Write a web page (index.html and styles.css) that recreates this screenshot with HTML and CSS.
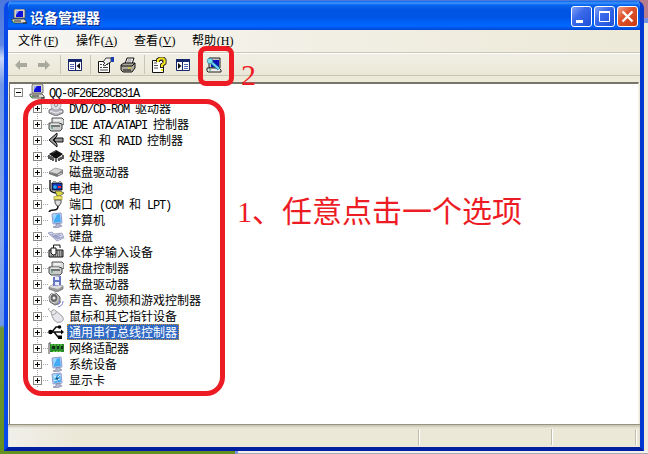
FILE: index.html
```
<!DOCTYPE html>
<html lang="zh-CN">
<head>
    <meta charset="UTF-8">
    <title>设备管理器</title>
    <link rel="stylesheet" href="styles.css">
</head>
<body>
    <!-- Shared icons -->
    <svg class="defs">
        <symbol id="computer" viewBox="0 0 16 16">
            <path d="M3 1l1-1h9l1 1v8H3z" fill="#d8d4c8" stroke="#555" stroke-width=".8"/>
            <path d="M5 2h7v6H5z" fill="#1010d8"/><path d="M5 2h3L5 6z" fill="#8ba8ff"/>
            <path d="M1 10h12l2 2v2H3l-2-2z" fill="#dedbd0" stroke="#333" stroke-width=".8"/>
            <path d="M3 12h7M12 14h4" stroke="#222"/><path d="M2 13h2" stroke="#27b43b"/>
        </symbol>
        <symbol id="lcd" viewBox="0 0 16 16">
            <path d="M4 2l9-1 1 10-9 1z" fill="#d6dcf2" stroke="#8c9ad0"/>
            <path d="M5 3l7-1 1 8-7 1z" fill="#43aaf5"/><path d="M5 3l4-.5-3 6z" fill="#9adcff"/>
            <path d="M8 12l4-1v2l2 1-5 2-4-1 3-1z" fill="#b4b8d4" stroke="#7c80a0" stroke-width=".7"/>
        </symbol>
        <symbol id="drive" viewBox="0 0 16 16">
            <path d="M4 2h10l2 2v4l-2 1H4z" fill="#ddd" stroke="#555"/>
            <path d="M1 7h10l3 1v5l-2 2H3l-2-2z" fill="#c8ccca" stroke="#444"/>
            <path d="M3 10h9" stroke="#222"/><path d="M3 8h8M6 4h7" stroke="#fff"/><path d="M3 12h2" stroke="#37a457"/>
        </symbol>
        <symbol id="disk" viewBox="0 0 16 16">
            <path d="M1 8l6-4 8 2v4l-6 3-8-3z" fill="#777"/><path d="M1 8l6-4 8 2-6 4z" fill="#d5d5d5" stroke="#888" stroke-width=".6"/>
            <path d="M10 11l4-2" stroke="#ddd"/>
        </symbol>
        <symbol id="panel" viewBox="0 0 16 16">
            <path d="M1.500 2.500h13v11h-13z" fill="#fff" stroke="#17276d"/><path d="M1 2h14v3H1z" fill="#17276d"/>
            <path d="M8.500 5v8" stroke="#17276d"/><path d="M3 7.500h4M3 9.500h4M3 11.500h4" stroke="#5268b5"/><path d="M13 6v6L9.500 9z" fill="#111"/>
        </symbol>
    </svg>

    <div class="desktop">
        <div class="behind"></div>
        <div class="taskedge"></div>
        <div class="window">
            <div class="titlebar">
                <svg class="icon"><use href="#computer"/></svg>
                <span class="title">设备管理器</span>
                <div class="controls">
                    <span class="control"><svg viewBox="0 0 21 21"><path d="M5 14h7v3H5z" fill="#fff"/></svg></span>
                    <span class="control"><svg viewBox="0 0 21 21"><path d="M5.500 5.500h10v10h-10z" fill="none" stroke="#fff"/><path d="M5 6h11" stroke="#fff" stroke-width="2"/></svg></span>
                    <span class="control close"><svg viewBox="0 0 21 21"><path d="M5.500 5.500l10 10m0-10l-10 10" stroke="#fff" stroke-width="2.400"/></svg></span>
                </div>
            </div>
            <div class="menubar">
                <span>文件<i class="key">(<u>F</u>)</i></span>
                <span>操作<i class="key">(<u>A</u>)</i></span>
                <span>查看<i class="key">(<u>V</u>)</i></span>
                <span>帮助<i class="key">(<u>H</u>)</i></span>
            </div>
            <div class="toolbar">
                <svg class="icon back" viewBox="0 0 16 16"><path d="M2 8l5-5v3h7v4H7v3z" fill="#aaa99d"/></svg>
                <svg class="icon forward" viewBox="0 0 16 16"><path d="M14 8L9 3v3H2v4h7v3z" fill="#aaa99d"/></svg>
                <span class="sep"></span>
                <svg class="icon"><use href="#panel"/></svg>
                <span class="sep"></span>
                <svg class="icon props" viewBox="0 0 18 16">
                    <path d="M1.500 4.500h11v11h-11z" fill="#fff" stroke="#111"/><path d="M3 7.500h2m1 0h5M3 10.500h2m1 0h5M3 13h8" stroke="#444"/>
                    <path d="M6 5l3-4h5v4l-4 2-2 2-2-1 2-2z" fill="#eee" stroke="#111" stroke-width=".8"/><path d="M14 0h3v5h-3z" fill="#1c3db0"/>
                </svg>
                <svg class="icon printer" viewBox="0 0 16 16">
                    <path d="M5 7l2-6h7l-2 6" fill="#fff" stroke="#111"/><path d="M7.500 3h4M7 5h4" stroke="#777"/>
                    <path d="M1 8l3-2h11v5l-3 4H3l-2-2z" fill="#aaa99c" stroke="#111"/><path d="M1 9h11l3-3M3 13h8" stroke="#111" fill="none"/><path d="M8 11h3" stroke="#eedf19"/>
                </svg>
                <span class="sep"></span>
                <svg class="icon" viewBox="0 0 16 16">
                    <path d="M1.500 3.500h9l2 2v10h-11z" fill="#fff" stroke="#111"/><path d="M3 6h3M3 8.500h4M3 11h4" stroke="#555"/>
                    <path d="M7 5V3l2-1.500h3L13.500 3v3L11 8v3" fill="none" stroke="#222" stroke-width="4"/>
                    <path d="M7 5V3l2-1.500h3L13.500 3v3L11 8v2m0 2v2" fill="none" stroke="#f5e51b" stroke-width="2.200"/>
                </svg>
                <svg class="icon mirrored"><use href="#panel"/></svg>
                <svg class="icon scan" viewBox="0 0 16 16">
                    <path d="M3 1h11v10H3z" fill="#ccc" stroke="#222"/><path d="M5 3h8v7H5z" fill="#1010b8"/>
                    <path d="M1 11h12l2 2v2H2l-1-1z" fill="#eee" stroke="#222"/><path d="M3 13h2" stroke="#27a43b"/>
                    <path d="M5 5l8 7" stroke="#08618c" stroke-width="3"/><path d="M5 5l8 7" stroke="#70d6fb" stroke-width="2"/><circle cx="4" cy="4" r="2.800" fill="#76e1ed" stroke="#356f89" stroke-width=".6"/>
                </svg>
            </div>
            <div class="tree">
                <div class="row root"><span class="box minus"></span><svg class="icon"><use href="#computer"/></svg><span class="name"><b>QQ-0F26E28CB31A</b></span></div>
                <div class="children">
                    <div class="row"><span class="box"></span><svg class="icon" viewBox="0 0 16 16"><path d="M1 10l6-3 8 3v3l-7 3-7-3z" fill="#b4b4c2" stroke="#777"/><ellipse cx="8" cy="5" rx="5" ry="5" fill="#ddddE8" stroke="#aaa"/><circle cx="8" cy="5" r="1.500" fill="#fff" stroke="#888"/><path d="M2 11l6 2 6-2" stroke="#eee" fill="none"/></svg><span class="name"><b>DVD/CD-ROM </b>驱动器</span></div>
                    <div class="row"><span class="box"></span><svg class="icon"><use href="#drive"/></svg><span class="name"><b>IDE ATA/ATAPI </b>控制器</span></div>
                    <div class="row"><span class="box"></span><svg class="icon" viewBox="0 0 16 16"><path d="M9 1L1 8l8 7v-3L5 8l4-4zM8 6h7v4H8L6 8z" fill="#999" stroke="#111"/></svg><span class="name"><b>SCSI </b>和<b> RAID </b>控制器</span></div>
                    <div class="row"><span class="box"></span><svg class="icon" viewBox="0 0 16 16"><path d="M1 6l7-4 7 4-7 5z" fill="#111"/><path d="M1 7v4m2-3v4m2-3v4m3-2v3m3-4v3m2-4v3m2-5v4" stroke="#111" stroke-width="1.400"/><path d="M4 5l4-2M2 8l6 4 6-4" stroke="#888" fill="none" stroke-width=".6"/></svg><span class="name">处理器</span></div>
                    <div class="row"><span class="box"></span><svg class="icon"><use href="#disk"/></svg><span class="name">磁盘驱动器</span></div>
                    <div class="row"><span class="box"></span><svg class="icon" viewBox="0 0 16 16"><path d="M2 0v9q0 3 6 4" stroke="#111" fill="none" stroke-width="1.400"/><path d="M4 3h10v7H4z" fill="#1638bc" stroke="#111"/><path d="M5 1h3v2H5zm6 0h2v2h-2z" fill="#999"/><path d="M7 5v4M5 7h4" stroke="#30d0f0"/><path d="M10 7h3" stroke="#f03030" stroke-width="2"/><path d="M7 11h5l4 2-4 3H9z" fill="#ded83f" stroke="#333" stroke-width=".7"/></svg><span class="name">电池</span></div>
                    <div class="row"><span class="box"></span><svg class="icon" viewBox="0 0 16 16"><path d="M6 0h8v4H6z" fill="#eee466" stroke="#897c20" stroke-width=".6"/><path d="M7 4h6v3l-2 3H9L7 7z" fill="#ddd" stroke="#555"/><path d="M10 10q0 4-4 4t-5 2" fill="none" stroke="#111" stroke-width="1.500"/></svg><span class="name">端口<b> (COM </b>和<b> LPT)</b></span></div>
                    <div class="row"><span class="box"></span><svg class="icon"><use href="#lcd"/></svg><span class="name">计算机</span></div>
                    <div class="row"><span class="box"></span><svg class="icon" viewBox="0 0 16 16"><path d="M0 5l4-1 2 2 8-1 2 5-7 3z" fill="#d2d5ee" stroke="#8b8fad" stroke-width=".7"/><path d="M2 6l7 5 6-2M4 6l6 4M7 7l5 3m-7-1l7-3m-5 4l6-3" stroke="#858bb4" stroke-width=".7" fill="none"/></svg><span class="name">键盘</span></div>
                    <div class="row"><span class="box"></span><svg class="icon" viewBox="0 0 16 16"><path d="M1 6h14v7H1z" fill="#aaa" stroke="#111"/><path d="M9 8h5M9 10h5M3 12h11" stroke="#333" stroke-dasharray="1 1"/><path d="M3 4h5v6l-2 1H5l-2-2z" fill="#fff" stroke="#111"/><path d="M5.500 4V1H12v3" fill="none" stroke="#111"/></svg><span class="name">人体学输入设备</span></div>
                    <div class="row"><span class="box"></span><svg class="icon"><use href="#drive"/></svg><span class="name">软盘控制器</span></div>
                    <div class="row"><span class="box"></span><svg class="icon" viewBox="0 0 16 16"><path d="M1 11l5-3 9 2v3l-6 3-8-3z" fill="#999" stroke="#666" stroke-width=".7"/><path d="M1 11l5-3 9 2-5 3z" fill="#ddd"/><path d="M5 1l8-1v9l-8 1z" fill="#6574c3"/><path d="M7 1h4v3H7zM7 6h4v3H7z" fill="#e9ecfc"/></svg><span class="name">软盘驱动器</span></div>
                    <div class="row"><span class="box"></span><svg class="icon" viewBox="0 0 16 16"><path d="M3 2l5-1 4 4v6l-5 2-5-3-1-5z" fill="#aaa" stroke="#666"/><ellipse cx="6" cy="6" rx="4" ry="4.500" fill="#666" stroke="#ddd"/><circle cx="6" cy="6" r="1.500" fill="#eee"/><path d="M9 13q3-1 3-4M10 15q5-1 5-6" fill="none" stroke="#777fd5"/></svg><span class="name">声音、视频和游戏控制器</span></div>
                    <div class="row"><span class="box"></span><svg class="icon" viewBox="0 0 16 16"><path d="M3 4q2-4 5-1l6 5q3 4-1 6-4 2-7-2L4 8z" fill="#e5e5eb" stroke="#888" stroke-width=".8"/><path d="M4 7q4 0 5-4M3 4Q-1 2 1 0" fill="none" stroke="#aaa"/></svg><span class="name">鼠标和其它指针设备</span></div>
                    <div class="row"><span class="box"></span><svg class="icon" viewBox="0 0 16 16"><path d="M2 8h12M4 8l4-5h3M6 8l4 5h2" fill="none" stroke="#111" stroke-width="1.500"/><circle cx="2.500" cy="8" r="2.300"/><path d="M13 5.500L16 8l-3 2.500z"/><circle cx="11.500" cy="3" r="1.800"/><path d="M10 11.500h4v3.500h-4z"/></svg><span class="name selected">通用串行总线控制器</span></div>
                    <div class="row"><span class="box"></span><svg class="icon" viewBox="0 0 16 16"><path d="M2 4h14v8H2z" fill="#2a8a2e"/><path d="M1 3v11M1 3h2" stroke="#444" fill="none"/><path d="M4 6h3v3H4zm5 0h2v3H9zm4 0h2v3h-2z" fill="#14301a"/><path d="M3 5h12M5 11.500h8" stroke="#76d547" stroke-dasharray="2 1"/></svg><span class="name">网络适配器</span></div>
                    <div class="row"><span class="box"></span><svg class="icon"><use href="#lcd"/></svg><span class="name">系统设备</span></div>
                    <div class="row"><span class="box"></span><svg class="icon" viewBox="0 0 16 16"><use href="#lcd" width="16" height="16"/><path d="M6 4l3 2 3-3M6 9l6-2" stroke="#e9fbff" fill="none"/><path d="M8 6l2 1" stroke="#124884" stroke-width="2"/></svg><span class="name">显示卡</span></div>
                </div>
            </div>
            <div class="statusbar"><span></span><span></span><span></span></div>
        </div>

        <!-- Red marks over the window -->
        <div class="mark mark-list"></div>
        <div class="mark mark-button"></div>
        <div class="note note-one"><span class="digit">1</span>、任意点击一个选项</div>
        <div class="note note-two"><span class="digit">2</span></div>
    </div>
</body>
</html>
```
FILE: styles.css
```
* {
    box-sizing: border-box;
}

body {
    margin: 0;
    font: 12px/16px "Noto Sans CJK SC", sans-serif;
    color: #000;
    overflow: hidden;
}

.defs {
    position: absolute;
    width: 0;
    height: 0;
}

.desktop {
    position: relative;
    width: 648px;
    height: 454px;
    padding: 1px 4px 3px;
    background: linear-gradient(#4b76dc 0, #5d86e4 45px, #c7d8f8 58px, #6f97e8 85px, #87a9ee 230px, #6e98ea 325px, #6d9437 328px, #669020 454px);
}

.behind {
    position: absolute;
    right: 0;
    top: 0;
    width: 8px;
    height: 454px;
    background: linear-gradient(#b97c8c 0 18px, #7793df 18px 23px, #eeebdc 23px);
}

.taskedge {
    position: absolute;
    left: 235px;
    right: 0;
    bottom: 0;
    height: 4px;
    background: #f0f0f0;
    border-left: 3px solid #7b8ee6;
    border-bottom: 1px solid #aaa;
}

.window {
    position: relative;
    display: flex;
    flex-direction: column;
    width: 640px;
    height: 450px;
    border: solid #0a3fe0;
    border-width: 0 4px 4px;
    border-color: #0831d9 #0338d0 #001ea0 #0848e8;
    border-radius: 7px 7px 0 0;
    background: #ece9d8;
    overflow: hidden;
}

.titlebar {
    display: flex;
    align-items: center;
    height: 29px;
    flex: none;
    margin: 0 -4px;
    padding: 2px 6px 0 7px;
    background: linear-gradient(#0863e8 0, #3e96ff 2px, #0865ee 4px, #0054e3 9px, #0055e5 16px, #0066ff 24px, #0060fa 26px, #0043cf 29px);
}

.icon {
    width: 16px;
    height: 16px;
    flex: none;
}

.title {
    margin-left: 3px;
    color: #fff;
    font-size: 14px;
    font-weight: bold;
    text-shadow: 1px 1px #0a2a80;
}

.controls {
    display: flex;
    gap: 2px;
    margin-left: auto;
}

.control {
    width: 21px;
    height: 21px;
    border: 1px solid #fff;
    border-radius: 3px;
    background: linear-gradient(135deg, #7fa0f5, #3a6aea 40%, #1d4fd8);
}

.control svg {
    display: block;
    width: 21px;
    height: 21px;
    margin: -1px;
}

.close {
    background: linear-gradient(135deg, #f0a088, #e0532c 40%, #c83c14);
}

.menubar {
    display: flex;
    gap: 16px;
    height: 22px;
    flex: none;
    padding: 2px 0 0 10px;
    background: linear-gradient(90deg, #f7f6f1, #ece9d8);
}

.key {
    display: inline-block;
    font: 12px/16px "Liberation Serif", serif;
    width: 18px;
    text-align: center;
}

.toolbar {
    display: flex;
    align-items: center;
    height: 30px;
    flex: none;
    padding: 0 5px 6px;
    border-top: 1px solid #c9c6b8;
    box-shadow: inset 0 1px #fff;
    background: linear-gradient(#f1efe5 0, #ebe7d8 22px, #c8c5b6 22px 23px, #ece9d8 23px);
}

.forward {
    margin-left: 7px;
}

.sep {
    width: 1px;
    height: 19px;
    margin: 0 6px 0 7px;
    background: #c9c6b8;
}

.back + .forward + .sep {
    margin-left: 8px;
}

.props {
    width: 18px;
}

.printer {
    margin: 0 1px 0 5px;
}

.mirrored {
    margin-left: 8px;
    transform: scaleX(-1);
}

.scan {
    margin-left: 15px;
}

.tree {
    height: 342px;
    flex: none;
    margin: 0 1px;
    padding-left: 3px;
    border-top: 2px solid #77746a;
    border-left: 1px solid #77746a;
    border-right: 1px solid #f5f3e8;
    background: #fff;
}

.row {
    position: relative;
    display: flex;
    align-items: center;
    height: 16px;
    white-space: nowrap;
}

.root {
    padding-left: 1px;
}

.root .icon {
    margin-left: 6px;
}

.root .name {
    margin-left: 2px;
}

.children {
    padding-left: 20px;
    background: repeating-linear-gradient(#aaa 0 1px, transparent 1px 2px) 24px 0 / 1px 296px no-repeat;
}

.children .icon {
    margin-left: 6px;
}

.children .box::before {
    content: "";
    position: absolute;
    left: 10px;
    top: 8px;
    width: 5px;
    border-top: 1px dotted #aaa;
}

.box {
    width: 9px;
    height: 9px;
    flex: none;
    border: 1px solid #8a8a84;
    background: linear-gradient(#000, #000) 1px 3px / 5px 1px no-repeat, linear-gradient(#000, #000) 3px 1px / 1px 5px no-repeat, #fff;
}

.minus {
    background: linear-gradient(#000, #000) 1px 3px / 5px 1px no-repeat, #fff;
}

.name {
    height: 16px;
    line-height: 15px;
    margin-left: 3px;
    padding: 0 2px;
}

.name b {
    font: 12px/15px "Liberation Mono", monospace;
    letter-spacing: -1.2px;
    white-space: pre;
}

.selected {
    background: #316ac5;
    color: #fff;
    outline: 1px dotted #c8923a;
    outline-offset: -1px;
}

.statusbar {
    display: flex;
    height: 23px;
    flex: none;
    padding: 4px 3px 2px 0;
    border-top: 1px solid #96937f;
    box-shadow: inset 0 2px 2px #cbc8b8;
    background: linear-gradient(90deg, #f0efe9, #ebe8d8 70px);
}

.statusbar span {
    border-right: 1px solid #fff;
    box-shadow: inset -1px 0 #c1beac;
}

.statusbar span:nth-child(1) { width: 412px; }
.statusbar span:nth-child(2) { width: 133px; }
.statusbar span:nth-child(3) { flex: 1; }

.mark {
    position: absolute;
    border: 5px solid #ed1c24;
}

.mark-list {
    left: 23px;
    top: 99px;
    width: 202px;
    height: 297px;
    border-radius: 19px;
}

.mark-button {
    left: 198px;
    top: 46px;
    width: 36px;
    height: 40px;
    border-radius: 8px;
}

.note {
    position: absolute;
    color: #ed1c24;
    font-size: 30px;
    line-height: 36px;
    white-space: nowrap;
}

.digit {
    display: inline-block;
    width: 15px;
    font-family: "Liberation Serif", serif;
}

.note-one {
    left: 237px;
    top: 191px;
}

.note-two {
    left: 241px;
    top: 54px;
}
```
